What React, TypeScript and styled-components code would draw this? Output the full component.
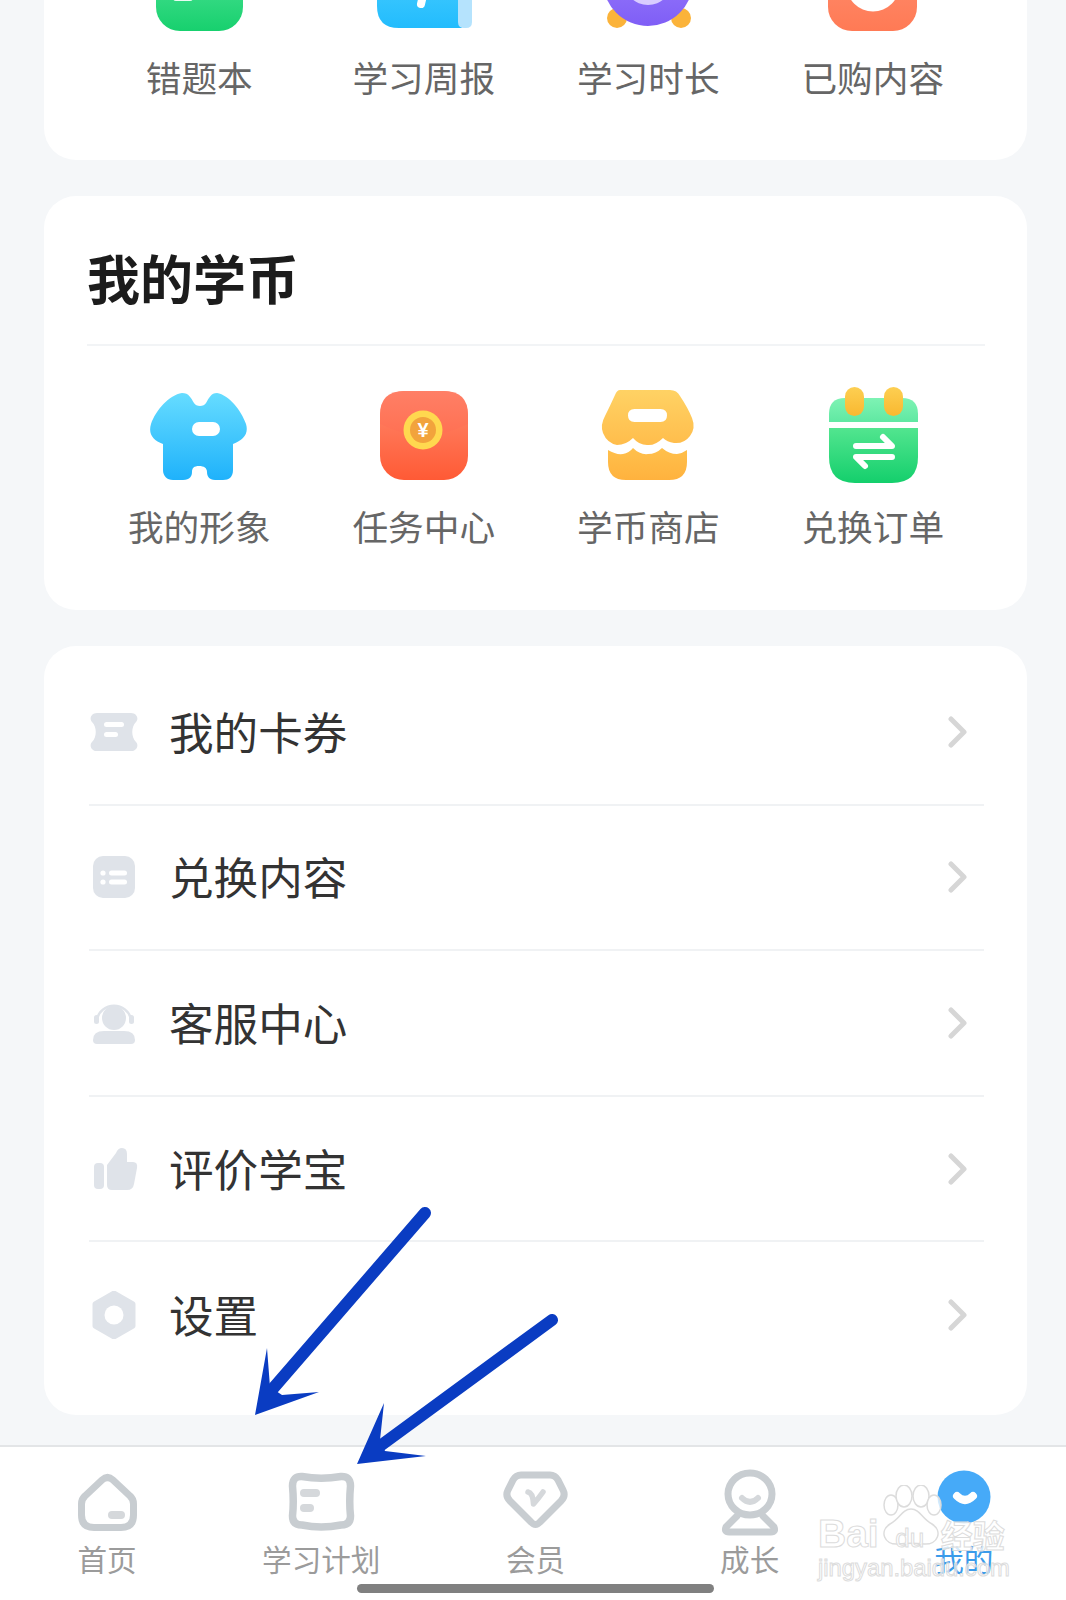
import type { ReactNode } from 'react';
import styled, { createGlobalStyle } from 'styled-components';

const GlobalStyle = createGlobalStyle`
  html, body { margin: 0; padding: 0; background: #f5f7f9; }
  body { font-family: "Noto Sans CJK SC", "Liberation Sans", sans-serif; }
`;

const Page = styled.div`
  position: relative;
  display: flex;
  flex-direction: column;
  width: 1066px;
  height: 1600px;
  overflow: hidden;
  background: #f5f7f9;
`;

const Content = styled.main`
  display: flex;
  flex-direction: column;
  gap: 36px;
  margin-top: -103px;
  padding: 0 39px 0 44px;
`;

const Card = styled.section`
  background: #fff;
  border-radius: 32px;
  padding: 0 42px 0 43px;
`;

const Title = styled.h2`
  margin: 0;
  padding: 51px 0 37px;
  font-size: 53px;
  line-height: 60px;
  font-weight: 700;
  color: #1c1c1c;
  border-bottom: 2px solid #f2f4f6;
`;

const EntryGrid = styled.div<{ $bottom: number }>`
  display: grid;
  grid-template-columns: repeat(4, 1fr);
  padding: 40px 0 ${({ $bottom }) => $bottom}px;
`;

const Entry = styled.div`
  display: flex;
  flex-direction: column;
  align-items: center;
`;

const EntryLabel = styled.span`
  margin-top: 15px;
  margin-bottom: 1px;
  font-size: 35.7px;
  line-height: 50px;
  color: #666;
  white-space: nowrap;
`;

const MenuCard = styled(Card)`
  padding: 14px 43px 27px 45px;
`;

const Row = styled.div<{ $last?: boolean }>`
  display: flex;
  align-items: center;
  height: 145.6px;
  box-sizing: border-box;
  padding: 0 17px 0 1px;
  border-bottom: ${({ $last }) => ($last ? 'none' : '2px solid #f0f2f4')};
`;

const RowLabel = styled.span`
  flex: 1;
  margin-left: 31px;
  padding-bottom: 2px;
  font-size: 44.6px;
  line-height: 60px;
  color: #333;
`;

const TabBar = styled.nav`
  margin-top: 30px;
  flex: 1;
  background: #fff;
  border-top: 2px solid #e3e5e7;
`;

const Tabs = styled.div`
  display: grid;
  grid-template-columns: repeat(5, 214.2px);
  padding-top: 22px;
`;

const Tab = styled.div`
  display: flex;
  flex-direction: column;
  align-items: center;
`;

const TabLabel = styled.span<{ $active?: boolean }>`
  margin-top: 3px;
  font-size: 29.6px;
  line-height: 34px;
  color: ${({ $active }) => ($active ? '#3b9bea' : '#9b9b9b')};
  white-space: nowrap;
`;

const HomeIndicator = styled.div`
  width: 357px;
  height: 9px;
  margin: 8px 0 0 357px;
  border-radius: 5px;
  background: #808080;
`;

const Overlay = styled.svg`
  position: absolute;
  left: 0;
  top: 0;
  pointer-events: none;
`;

const Watermark = styled.div`
  position: absolute;
  left: 818px;
  top: 1485px;
  width: 192px;
  height: 94px;
  pointer-events: none;
`;

const Paw = styled.svg`
  position: absolute;
  left: 62px;
  top: 0;
`;

const MarkLine = styled.div`
  position: absolute;
  left: 0;
  top: 22px;
  display: flex;
  align-items: center;
  line-height: 46px;
  color: rgba(255, 255, 255, 0.8);
  -webkit-text-stroke: 1px #dcdcdc;
`;

const MarkBai = styled.span`
  font-family: "Liberation Sans", sans-serif;
  font-weight: 700;
  font-size: 39px;
`;

const MarkDu = styled.span`
  width: 62px;
  text-align: center;
  font-family: "Liberation Sans", sans-serif;
  font-size: 26px;
  padding-top: 8px;
`;

const MarkCn = styled.span`
  font-size: 32px;
  font-weight: 700;
`;

const MarkUrl = styled.div`
  position: absolute;
  left: 0;
  top: 70px;
  font-family: "Liberation Sans", sans-serif;
  font-size: 23.8px;
  line-height: 26px;
  color: rgba(255, 255, 255, 0.6);
  -webkit-text-stroke: 1px #dcdcdc;
  white-space: nowrap;
`;

const grey = '#dfe3e9';
const tabGrey = '#c8cdd1';
const tabSoft = '#d5d8db';

function Grad({ id, from, to }: { id: string; from: string; to: string }) {
  return (
    <linearGradient id={id} x1="0" y1="0" x2="0" y2="1">
      <stop offset="0" stopColor={from} />
      <stop offset="1" stopColor={to} />
    </linearGradient>
  );
}

function EntryIcon({ children }: { children: ReactNode }) {
  return (
    <svg width="100" height="100" viewBox="0 0 100 100">
      {children}
    </svg>
  );
}

const topEntries: { label: string; icon: ReactNode }[] = [
  {
    label: '错题本',
    icon: (
      <EntryIcon>
        <defs><Grad id="g-wrong" from="#5fe8a0" to="#17d06e" /></defs>
        <rect x="7" y="6" width="87" height="88" rx="24" fill="url(#g-wrong)" />
        <rect x="24" y="50" width="20" height="14" rx="3" fill="#fff" opacity="0.9" />
      </EntryIcon>
    ),
  },
  {
    label: '学习周报',
    icon: (
      <EntryIcon>
        <defs><Grad id="g-week" from="#4fd0ff" to="#22bcfd" /></defs>
        <path d="M3 20 H88 V91 H25 Q3 91 3 69 Z" fill="url(#g-week)" />
        <path d="M84 20 H98 V85 Q98 91 92 91 H90 Q84 91 84 85 Z" fill="#b5e3fd" />
        <path d="M51 50 L47 67" stroke="#fff" strokeWidth="8" strokeLinecap="round" />
      </EntryIcon>
    ),
  },
  {
    label: '学习时长',
    icon: (
      <EntryIcon>
        <defs><Grad id="g-time" from="#a488ff" to="#7f5ef6" /></defs>
        <circle cx="19" cy="81" r="10" fill="#fbb33a" />
        <circle cx="83" cy="81" r="10" fill="#fbb33a" />
        <circle cx="50" cy="44" r="45" fill="url(#g-time)" />
        <circle cx="50" cy="44" r="24" fill="#d9ccff" />
      </EntryIcon>
    ),
  },
  {
    label: '已购内容',
    icon: (
      <EntryIcon>
        <defs><Grad id="g-buy" from="#ff9274" to="#ff7a55" /></defs>
        <rect x="5" y="6" width="89" height="88" rx="24" fill="url(#g-buy)" />
        <circle cx="50" cy="48" r="26.5" fill="#fff" />
      </EntryIcon>
    ),
  },
];

const coinEntries: { label: string; icon: ReactNode }[] = [
  {
    label: '我的形象',
    icon: (
      <EntryIcon>
        <defs><Grad id="g-shirt" from="#66dcff" to="#1fb2fb" /></defs>
        <path
          d="M33 7 C40 7 42 12 45 17 C47 21 55 21 57 17 C60 12 62 7 68 7 C80 9 92 24 97 38 C100 48 94 54 84 58 L84 84 C84 91 80 94 74 94 L66 94 C60 94 58 90 58 86 C58 82 55 80 50 80 C45 80 43 82 43 86 C43 90 41 94 34 94 L24 94 C18 94 14 90 14 84 L14 58 C4 54 -1 48 2 38 C7 24 20 9 33 7 Z"
          fill="url(#g-shirt)"
        />
        <rect x="43" y="36" width="28" height="14" rx="7" fill="#fff" />
      </EntryIcon>
    ),
  },
  {
    label: '任务中心',
    icon: (
      <EntryIcon>
        <defs>
          <Grad id="g-red" from="#ff8a6e" to="#ff5a35" />
          <Grad id="g-flap" from="#ff7f66" to="#ff7052" />
        </defs>
        <rect x="6" y="5" width="88" height="89" rx="24" fill="url(#g-red)" />
        <path d="M6 38 V29 Q6 5 30 5 H70 Q94 5 94 29 V38 Q69 50 50 50 Q31 50 6 38 Z" fill="url(#g-flap)" />
        <circle cx="49" cy="44" r="19.5" fill="#ffd84f" />
        <circle cx="49" cy="44" r="13" fill="#f2a33c" />
        <text x="49" y="51" textAnchor="middle" fontSize="20" fontWeight="700" fontFamily="Liberation Sans, sans-serif" fill="#fff">¥</text>
      </EntryIcon>
    ),
  },
  {
    label: '学币商店',
    icon: (
      <EntryIcon>
        <defs>
          <Grad id="g-shop" from="#ffd264" to="#ffbd4c" />
          <Grad id="g-shop2" from="#ffc04c" to="#ffb23e" />
        </defs>
        <path
          fillRule="evenodd"
          d="M22 4 H72 Q79 4 82 10 Q90 22 94 32 Q98 42 92 50 Q86 58 76 57 Q69 56 65 52 Q57 60 49 59 Q41 59 35 52 Q28 59 19 59 Q9 57 5 47 Q2 39 7 30 Q12 20 17 9 Q19 4 22 4 Z M36.5 23 Q30 23 30 29.5 Q30 36 36.5 36 H62.5 Q69 36 69 29.5 Q69 23 62.5 23 Z"
          fill="url(#g-shop)"
        />
        <path
          d="M10 64 Q18 69 25 68 Q31 67 35 62 Q42 69 50 68 Q58 68 64 62 Q71 68 79 68 Q85 67 89 64 V76 Q89 94 71 94 H28 Q10 94 10 76 Z"
          fill="url(#g-shop2)"
        />
      </EntryIcon>
    ),
  },
  {
    label: '兑换订单',
    icon: (
      <EntryIcon>
        <defs>
          <Grad id="g-cal-top" from="#7ef3b4" to="#60e8a2" />
          <Grad id="g-cal" from="#52e58f" to="#14cf6c" />
          <Grad id="g-pin" from="#fdcf52" to="#f9b830" />
        </defs>
        <path d="M6 36 V28 Q6 12 22 12 H79 Q95 12 95 28 V36 Z" fill="url(#g-cal-top)" />
        <path d="M6 42 H95 V71 Q95 97 69 97 H32 Q6 97 6 71 Z" fill="url(#g-cal)" />
        <rect x="22" y="1" width="19" height="29" rx="9.5" fill="url(#g-pin)" />
        <rect x="61" y="1" width="19" height="29" rx="9.5" fill="url(#g-pin)" />
        <path d="M33 60 H69 L60 51 M69 71 H33 L42 80" fill="none" stroke="#fff" strokeWidth="6" strokeLinecap="round" strokeLinejoin="round" />
      </EntryIcon>
    ),
  },
];

function RowIcon({ children }: { children: ReactNode }) {
  return (
    <svg width="48" height="48" viewBox="0 0 48 48">
      {children}
    </svg>
  );
}

const menuRows: { label: string; icon: ReactNode }[] = [
  {
    label: '我的卡券',
    icon: (
      <RowIcon>
        <path d="M7 5 H41 C47 5 49 11 46 14 C41 19 41 29 46 34 C49 37 47 43 41 43 H7 C1 43 -1 37 2 34 C7 29 7 19 2 14 C-1 11 1 5 7 5 Z" fill={grey} />
        <rect x="14" y="14" width="20" height="5" rx="2.5" fill="#fff" />
        <rect x="14" y="24" width="14" height="5" rx="2.5" fill="#fff" />
      </RowIcon>
    ),
  },
  {
    label: '兑换内容',
    icon: (
      <RowIcon>
        <rect x="3" y="3" width="42" height="42" rx="10" fill={grey} />
        <circle cx="13" cy="20" r="2.6" fill="#fff" />
        <circle cx="13" cy="29" r="2.6" fill="#fff" />
        <rect x="19" y="17.5" width="18" height="5" rx="2.5" fill="#fff" />
        <rect x="19" y="26.5" width="18" height="5" rx="2.5" fill="#fff" />
      </RowIcon>
    ),
  },
  {
    label: '客服中心',
    icon: (
      <RowIcon>
        <path d="M7 20 A17.5 17.5 0 0 1 41 20" fill="none" stroke={grey} strokeWidth="2.5" />
        <rect x="4" y="16" width="5" height="9" rx="2.5" fill={grey} />
        <rect x="39" y="16" width="5" height="9" rx="2.5" fill={grey} />
        <circle cx="24" cy="19" r="12" fill={grey} />
        <path d="M3 41 Q3 32 14 32 H34 Q45 32 45 41 Q45 45 41 45 H7 Q3 45 3 41 Z" fill={grey} />
      </RowIcon>
    ),
  },
  {
    label: '评价学宝',
    icon: (
      <RowIcon>
        <rect x="4" y="18" width="10" height="26" rx="4" fill={grey} />
        <path d="M17 20 L26 8 Q28 3 32 3 Q37 3 37 9 V17 H43 Q48 17 47 23 L44 39 Q43 45 37 45 H22 Q17 45 17 40 Z" fill={grey} />
      </RowIcon>
    ),
  },
  {
    label: '设置',
    icon: (
      <RowIcon>
        <polygon points="24,2 43,13 43,35 24,46 5,35 5,13" fill={grey} stroke={grey} strokeWidth="5" strokeLinejoin="round" />
        <circle cx="24" cy="24" r="9.5" fill="#fff" />
      </RowIcon>
    ),
  },
];

function TabIcon({ children }: { children: ReactNode }) {
  return (
    <svg width="70" height="70" viewBox="0 0 70 70" fill="none" strokeLinecap="round" strokeLinejoin="round">
      {children}
    </svg>
  );
}

const tabs: { label: string; active?: boolean; icon: ReactNode }[] = [
  {
    label: '首页',
    icon: (
      <TabIcon>
        <path d="M30 11 Q35.5 6 41 11 L58 27 Q61.5 30 61.5 35 V46 Q61.5 58.5 49 58.5 H22 Q9.5 58.5 9.5 46 V35 Q9.5 30 13 27 Z" stroke={tabGrey} strokeWidth="7" />
        <rect x="36" y="42" width="17" height="8" rx="4" fill={tabSoft} />
      </TabIcon>
    ),
  },
  {
    label: '学习计划',
    icon: (
      <TabIcon>
        <path d="M16 7.5 Q35 11 55 7.5 Q64.5 7 64.5 17 Q63 33 64.5 47 Q64.5 56 55 56 Q35 60 16 56 Q6.5 56 6.5 47 Q8 33 6.5 17 Q6.5 7 16 7.5 Z" stroke={tabGrey} strokeWidth="7.5" />
        <rect x="14" y="20" width="20" height="8" rx="4" fill={tabSoft} />
        <rect x="14" y="35" width="14" height="8" rx="4" fill={tabSoft} />
      </TabIcon>
    ),
  },
  {
    label: '会员',
    icon: (
      <TabIcon>
        <path d="M21 6 H50 Q55 6 58 11 L63 21 Q66 27 61 32 L40 53 Q35.5 58 31 53 L10 32 Q5 27 8 21 L13 11 Q16 6 21 6 Z" stroke={tabGrey} strokeWidth="7" />
        <path d="M28 23 Q33 24 33.5 35 Q38 30 43 23" stroke={tabSoft} strokeWidth="5.5" />
      </TabIcon>
    ),
  },
  {
    label: '成长',
    icon: (
      <TabIcon>
        <ellipse cx="35" cy="25" rx="22" ry="21" stroke={tabGrey} strokeWidth="7" />
        <path d="M22 47 L11 58 Q9 63 14 63 H56 Q61 63 59 58 L48 47" stroke={tabGrey} strokeWidth="7" />
        <path d="M27 29 Q35 37 43 29" stroke={tabSoft} strokeWidth="6" />
      </TabIcon>
    ),
  },
  {
    label: '我的',
    active: true,
    icon: (
      <TabIcon>
        <circle cx="35" cy="28" r="26.5" fill="#46aaf8" />
        <path d="M28 27 Q36 35 44 27" stroke="#fff" strokeWidth="8" />
      </TabIcon>
    ),
  },
];

function Chevron() {
  return (
    <svg width="19" height="32" viewBox="0 0 19 32" fill="none">
      <path d="M3 3 L16 16 L3 29" stroke="#d6d6d6" strokeWidth="5" strokeLinecap="round" strokeLinejoin="round" />
    </svg>
  );
}

export default function App() {
  return (
    <Page>
      <GlobalStyle />
      <Content>
        <Card>
          <EntryGrid $bottom={57}>
            {topEntries.map(e => (
              <Entry key={e.label}>
                {e.icon}
                <EntryLabel>{e.label}</EntryLabel>
              </Entry>
            ))}
          </EntryGrid>
        </Card>

        <Card>
          <Title>我的学币</Title>
          <EntryGrid $bottom={58}>
            {coinEntries.map(e => (
              <Entry key={e.label}>
                {e.icon}
                <EntryLabel>{e.label}</EntryLabel>
              </Entry>
            ))}
          </EntryGrid>
        </Card>

        <MenuCard>
          {menuRows.map((r, i) => (
            <Row key={r.label} $last={i === menuRows.length - 1}>
              {r.icon}
              <RowLabel>{r.label}</RowLabel>
              <Chevron />
            </Row>
          ))}
        </MenuCard>
      </Content>

      <TabBar>
        <Tabs>
          {tabs.map(t => (
            <Tab key={t.label}>
              {t.icon}
              <TabLabel $active={t.active}>{t.label}</TabLabel>
            </Tab>
          ))}
        </Tabs>
        <HomeIndicator />
      </TabBar>

      {/* annotation arrows drawn on top of the screenshot */}
      <Overlay width="1066" height="1600" viewBox="0 0 1066 1600">
        <path d="M425 1213 L270 1392" stroke="#0a3cc2" strokeWidth="12" strokeLinecap="round" />
        <polygon points="255,1415 267,1348 270,1387 282,1395 319,1392" fill="#0a3cc2" />
        <path d="M552 1320 L376 1449" stroke="#0a3cc2" strokeWidth="12" strokeLinecap="round" />
        <polygon points="357,1464 384,1403 380,1440 385,1451 426,1456" fill="#0a3cc2" />
      </Overlay>

      <Watermark>
        <Paw width="62" height="60" viewBox="0 0 62 60" fill="rgba(255,255,255,0.75)" stroke="#dcdcdc" strokeWidth="1.5">
          <ellipse cx="11" cy="20" rx="7" ry="10" />
          <ellipse cx="24" cy="11" rx="8" ry="11" />
          <ellipse cx="41" cy="11" rx="8" ry="11" />
          <ellipse cx="54" cy="20" rx="7" ry="10" />
          <path d="M31 24 C22 24 20 34 10 39 C-1 46 4 60 18 59 C27 58 35 58 44 59 C58 60 63 46 52 39 C42 34 40 24 31 24 Z" />
        </Paw>
        <MarkLine>
          <MarkBai>Bai</MarkBai>
          <MarkDu>du</MarkDu>
          <MarkCn>经验</MarkCn>
        </MarkLine>
        <MarkUrl>jingyan.baidu.com</MarkUrl>
      </Watermark>
    </Page>
  );
}
